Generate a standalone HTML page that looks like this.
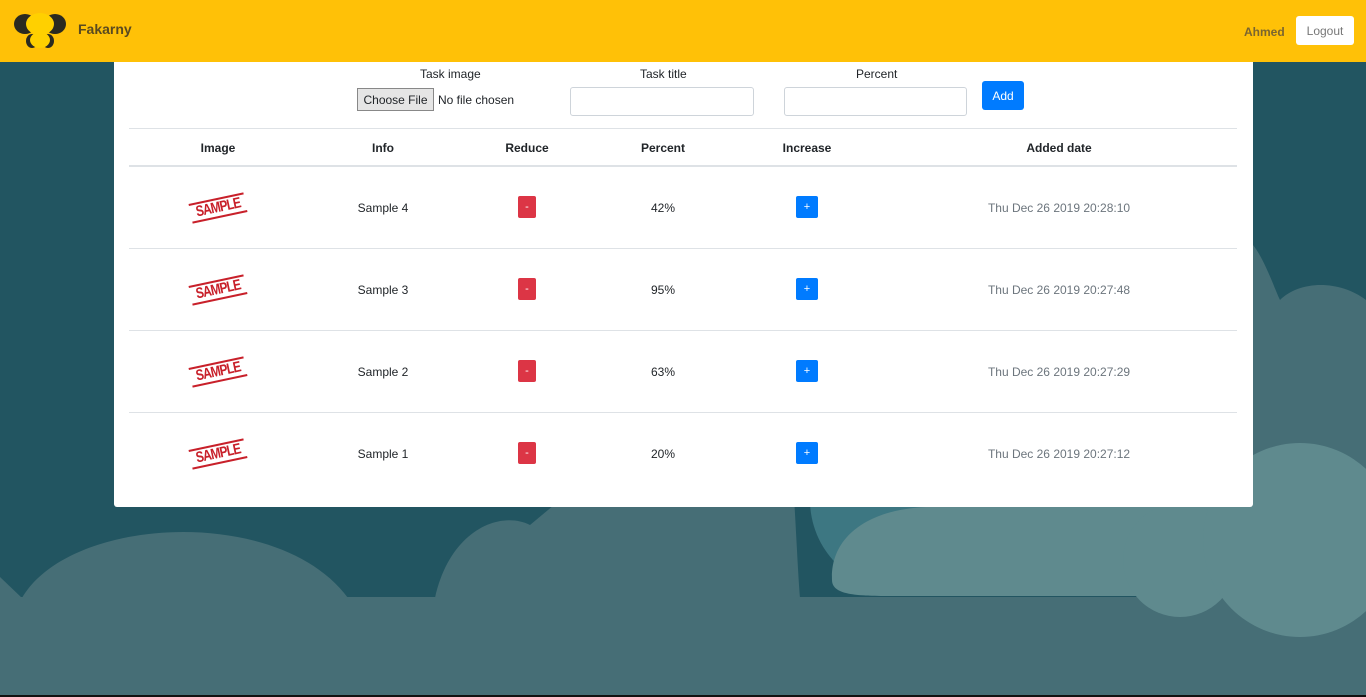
<!DOCTYPE html>
<html><head><meta charset="utf-8"><style>
*{box-sizing:border-box;margin:0;padding:0}
body{width:1366px;height:697px;overflow:hidden;background:#225561;font-family:"Liberation Sans",sans-serif;font-size:12px;color:#212529;position:relative}
.bg{position:absolute;left:0;top:0}
.hdr{position:absolute;left:0;top:0;width:1366px;height:62px;background:#ffc107}
.brand{position:absolute;left:78px;top:21px;font-size:14px;font-weight:bold;color:#5a4a20}
.user{position:absolute;left:1244px;top:25px;font-weight:bold;color:#7a6530;font-size:12px}
.logout{position:absolute;left:1296px;top:16px;width:58px;height:29px;background:#fff;border-radius:3px;color:#777;font-size:12px;text-align:center;line-height:31px}
.card{position:absolute;left:114px;top:62px;width:1139px;height:445px;background:#fff;border-radius:0 0 3px 3px}
.lbl{position:absolute;top:5px;font-size:12px;text-align:center}
.inp{position:absolute;top:25px;height:29px;border:1px solid #ced4da;border-radius:3px;background:#fff}
.cf{position:absolute;left:243px;top:26px;width:77px;height:23px;background:#e5e5e5;border:1px solid #888;font-size:12px;line-height:23px;text-align:center}
.nf{position:absolute;left:324px;top:31px;font-size:12px}
.add{position:absolute;left:868px;top:19px;width:42px;height:29px;background:#007bff;color:#fff;border-radius:3px;text-align:center;line-height:31px;font-size:12px}
.hr{position:absolute;left:15px;width:1108px;background:#dee2e6}
.c{position:absolute;text-align:center;transform:translateX(-50%);white-space:nowrap}
.th{font-weight:bold;top:79px}
.btn{position:absolute;width:18px;height:22px;border-radius:2px;color:#fff;text-align:center;line-height:22px;font-size:11px}
.red{background:#dc3545}.blue{background:#007bff;width:22px}
.smp{position:absolute;width:56px;height:20px;transform:rotate(-12deg);border-top:2px solid #c8202a;border-bottom:2px solid #c8202a;color:#c8202a;font-weight:bold;font-size:15px;text-align:center;line-height:16px;letter-spacing:-1px;overflow:hidden}
.smp span{display:inline-block;transform:scaleX(.8)}
.date{color:#6c757d}
</style></head><body>
<svg class="bg" width="1366" height="697">
<path fill="#466e76" d="M1253,245 C1265,260 1275,290 1280,300 C1300,280 1340,280 1366,300 L1366,697 L1253,697 Z"/>
<path fill="#466e76" d="M557,440 L790,440 C795,500 797,560 800,598 L557,598 Z"/>
<path fill="#466e76" d="M435,598 C450,530 500,510 530,525 L560,500 L560,598 Z"/>
<path fill="#466e76" d="M0,577 L22,598 C70,515 280,505 348,598 L0,598 Z"/>
<rect x="0" y="597" width="1366" height="100" fill="#466e76"/>
<circle cx="900" cy="500" r="90" fill="#3d7782"/>
<path fill="#5f8a8e" d="M832,580 C830,530 880,505 940,507 L1366,507 L1366,596 L897,596 C860,596 832,596 832,580 Z"/>
<circle cx="1180" cy="560" r="57" fill="#5f8a8e"/>
<circle cx="1300" cy="540" r="97" fill="#5f8a8e"/>
<rect x="0" y="695" width="1366" height="2" fill="#111"/>
</svg>
<div class="hdr">
<svg style="position:absolute;left:13px;top:12px" width="54" height="38"><ellipse cx="12" cy="12" rx="11" ry="10" fill="#2b2a20"/><ellipse cx="42" cy="12" rx="11" ry="10" fill="#2b2a20"/><ellipse cx="19" cy="29" rx="6" ry="7" fill="#2b2a20"/><ellipse cx="35" cy="29" rx="6" ry="7" fill="#2b2a20"/><ellipse cx="27" cy="12" rx="14" ry="11" fill="#ffd000"/><ellipse cx="27" cy="28" rx="10" ry="8" fill="#ffd000"/></svg>
<div class="brand">Fakarny</div>
<div class="user">Ahmed</div>
<div class="logout">Logout</div>
</div>
<div class="card">
<div class="lbl" style="left:306px">Task image</div>
<div class="cf">Choose File</div><div class="nf">No file chosen</div>
<div class="lbl" style="left:526px">Task title</div>
<div class="inp" style="left:456px;width:184px"></div>
<div class="lbl" style="left:742px">Percent</div>
<div class="inp" style="left:670px;width:183px"></div>
<div class="add">Add</div>
<div class="hr" style="top:66px;height:1px"></div>
<div class="c th" style="left:104px">Image</div>
<div class="c th" style="left:269px">Info</div>
<div class="c th" style="left:413px">Reduce</div>
<div class="c th" style="left:549px">Percent</div>
<div class="c th" style="left:693px">Increase</div>
<div class="c th" style="left:945px">Added date</div>
<div class="hr" style="top:103px;height:2px"></div>
<div class="smp" style="left:76px;top:136px"><span>SAMPLE</span></div>
<div class="c" style="left:269px;top:139px">Sample 4</div>
<div class="btn red" style="left:404px;top:134px">-</div>
<div class="c" style="left:549px;top:139px">42%</div>
<div class="btn blue" style="left:682px;top:134px">+</div>
<div class="c date" style="left:945px;top:139px">Thu Dec 26 2019 20:28:10</div>
<div class="hr" style="top:186px;height:1px"></div>
<div class="smp" style="left:76px;top:218px"><span>SAMPLE</span></div>
<div class="c" style="left:269px;top:221px">Sample 3</div>
<div class="btn red" style="left:404px;top:216px">-</div>
<div class="c" style="left:549px;top:221px">95%</div>
<div class="btn blue" style="left:682px;top:216px">+</div>
<div class="c date" style="left:945px;top:221px">Thu Dec 26 2019 20:27:48</div>
<div class="hr" style="top:268px;height:1px"></div>
<div class="smp" style="left:76px;top:300px"><span>SAMPLE</span></div>
<div class="c" style="left:269px;top:303px">Sample 2</div>
<div class="btn red" style="left:404px;top:298px">-</div>
<div class="c" style="left:549px;top:303px">63%</div>
<div class="btn blue" style="left:682px;top:298px">+</div>
<div class="c date" style="left:945px;top:303px">Thu Dec 26 2019 20:27:29</div>
<div class="hr" style="top:350px;height:1px"></div>
<div class="smp" style="left:76px;top:382px"><span>SAMPLE</span></div>
<div class="c" style="left:269px;top:385px">Sample 1</div>
<div class="btn red" style="left:404px;top:380px">-</div>
<div class="c" style="left:549px;top:385px">20%</div>
<div class="btn blue" style="left:682px;top:380px">+</div>
<div class="c date" style="left:945px;top:385px">Thu Dec 26 2019 20:27:12</div>
</div>
</body></html>
